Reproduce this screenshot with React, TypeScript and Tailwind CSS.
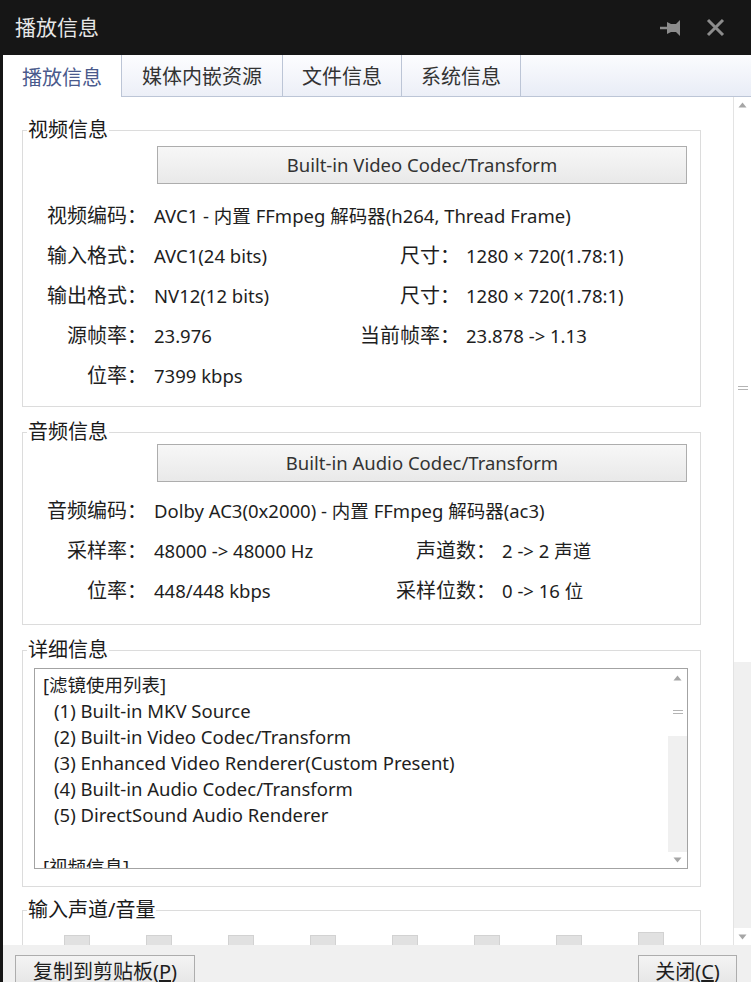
import type { ReactNode } from "react";

const sans = "font-['Noto_Sans','Noto_Sans_CJK_SC',sans-serif]";

const Fieldset = ({
  legend,
  className,
  children,
}: {
  legend: string;
  className?: string;
  children?: ReactNode;
}) => (
  <fieldset
    className={`ml-[19px] w-[679px] border border-[#dcdcdc] ${className ?? ""}`}
  >
    <legend className="ml-[4px] px-[1px] text-[20px] leading-[24px] text-[#1a1a1a]">
      {legend}
    </legend>
    {children}
  </fieldset>
);

const CodecButton = ({ label }: { label: string }) => (
  <div className="ml-[134px] flex h-[38px] w-[530px] items-center justify-center border border-[#adadad] bg-gradient-to-b from-[#f7f7f7] to-[#e9e9e9] text-[18.5px] text-[#333]">
    {label}
  </div>
);

type RowProps = {
  label: string;
  value: string;
  label2?: string;
  value2?: string;
  valueWidth?: string;
};

const Row = ({ label, value, label2, value2, valueWidth = "w-[206px]" }: RowProps) => (
  <div className="flex h-[40px] items-center text-[#1e1e1e]">
    <span className="w-[124px] shrink-0 text-right text-[20px]">{label}</span>
    <span className={`ml-[7px] shrink-0 whitespace-nowrap text-[18.5px] ${label2 ? valueWidth : ""}`}>
      {value}
    </span>
    {label2 && (
      <>
        <span className="w-[100px] shrink-0 text-right text-[20px]">{label2}</span>
        <span className="ml-[6px] whitespace-nowrap text-[18.5px]">{value2}</span>
      </>
    )}
  </div>
);

const Arrow = ({ down }: { down?: boolean }) => (
  <svg width="9" height="6" viewBox="0 0 9 6" className={down ? "rotate-180" : ""}>
    <path d="M4.5 0.5 L8.5 5.5 H0.5 Z" fill="#a6a6a6" />
  </svg>
);

const Grip = () => (
  <div className="flex flex-col gap-[2px]">
    <div className="h-px w-[10px] bg-[#b4b4b4]" />
    <div className="h-px w-[10px] bg-[#b4b4b4]" />
  </div>
);

const filterLines = [
  "(1) Built-in MKV Source",
  "(2) Built-in Video Codec/Transform",
  "(3) Enhanced Video Renderer(Custom Present)",
  "(4) Built-in Audio Codec/Transform",
  "(5) DirectSound Audio Renderer",
];

const tabs = ["播放信息", "媒体内嵌资源", "文件信息", "系统信息"];

export default function App() {
  return (
    <div className={`flex h-[982px] w-[751px] flex-col overflow-hidden bg-[#161616] ${sans}`}>
      {/* title bar */}
      <div className="flex h-[55px] shrink-0 items-center justify-between pl-[15px] pr-[26px]">
        <span className="text-[21px] text-[#e6e6e6]">播放信息</span>
        <div className="flex items-center gap-[24px]">
          <svg width="22" height="18" viewBox="0 0 22 18">
            <path d="M0 9 H8" stroke="#8c8c8c" strokeWidth="2.5" />
            <path d="M7 3 L11 5 H16 L20 1 V17 L16 13 H11 L7 15 Z" fill="#8c8c8c" />
          </svg>
          <svg width="19" height="19" viewBox="0 0 19 19">
            <path d="M2 2 L17 17 M17 2 L2 17" stroke="#8c8c8c" strokeWidth="3" />
          </svg>
        </div>
      </div>

      <div className="ml-[3px] flex min-h-0 flex-1 flex-col bg-white">
        {/* tabs */}
        <div className="flex h-[42px] shrink-0 bg-gradient-to-b from-[#fbfcfe] to-[#e8ecf6]">
          {tabs.map((tab, i) => (
            <div
              key={tab}
              className={`flex items-center border-r border-[#bcc5d6] pt-[3px] text-[20px] ${
                i === 1 ? "px-[20px]" : "px-[19px]"
              } ${
                i === 0
                  ? "bg-white text-[#4a5a8c]"
                  : "border-b bg-gradient-to-b from-[#fdfdff] to-[#eceff7] text-[#333]"
              }`}
            >
              {tab}
            </div>
          ))}
          <div className="flex-1 border-b border-[#bcc5d6]" />
        </div>

        {/* content */}
        <div className="flex min-h-0 flex-1">
          <div className="min-w-0 flex-1 overflow-hidden">
            <Fieldset legend="视频信息" className="mt-[21px] pb-[10px] pt-[4px]">
              <CodecButton label="Built-in Video Codec/Transform" />
              <div className="mt-[12px]">
                <Row label="视频编码：" value="AVC1 - 内置 FFmpeg 解码器(h264, Thread Frame)" />
                <Row label="输入格式：" value="AVC1(24 bits)" label2="尺寸：" value2="1280 × 720(1.78:1)" />
                <Row label="输出格式：" value="NV12(12 bits)" label2="尺寸：" value2="1280 × 720(1.78:1)" />
                <Row label="源帧率：" value="23.976" label2="当前帧率：" value2="23.878 -> 1.13" />
                <Row label="位率：" value="7399 kbps" />
              </div>
            </Fieldset>

            <Fieldset legend="音频信息" className="mt-[13px] pb-[13px]">
              <CodecButton label="Built-in Audio Codec/Transform" />
              <div className="mt-[9px]">
                <Row label="音频编码：" value="Dolby AC3(0x2000) - 内置 FFmpeg 解码器(ac3)" />
                <Row
                  label="采样率："
                  value="48000 -> 48000 Hz"
                  label2="声道数："
                  value2="2 -> 2 声道"
                  valueWidth="w-[242px]"
                />
                <Row
                  label="位率："
                  value="448/448 kbps"
                  label2="采样位数："
                  value2="0 -> 16 位"
                  valueWidth="w-[242px]"
                />
              </div>
            </Fieldset>

            <Fieldset legend="详细信息" className="mt-[13px] pb-[17px]">
              <div className="ml-[11px] mt-[6px] flex h-[201px] w-[654px] border border-[#a3a3a3]">
                <div className="min-w-0 flex-1 overflow-hidden pl-[8px] pt-[3px] text-[18.5px] leading-[26px] text-[#1e1e1e]">
                  <div>[滤镜使用列表]</div>
                  {filterLines.map((line) => (
                    <div key={line} className="whitespace-nowrap pl-[11px]">
                      {line}
                    </div>
                  ))}
                  <div className="h-[26px]" />
                  <div>[视频信息]</div>
                </div>
                <div className="flex w-[19px] shrink-0 flex-col">
                  <div className="flex h-[18px] items-center justify-center bg-white">
                    <Arrow />
                  </div>
                  <div className="flex h-[49px] items-center justify-center bg-white">
                    <Grip />
                  </div>
                  <div className="flex-1 bg-[#f0f0f0]" />
                  <div className="flex h-[16px] items-center justify-center bg-white">
                    <Arrow down />
                  </div>
                </div>
              </div>
            </Fieldset>

            <Fieldset legend="输入声道/音量" className="mt-[11px] pb-[10px]">
              <div className="ml-[41px] mt-[10px] flex items-end gap-[56px]">
                {Array.from({ length: 8 }).map((_, i) => (
                  <div
                    key={i}
                    className={`w-[26px] border border-[#d2d2d2] bg-[#e1e1e1] ${i === 7 ? "h-[36px]" : "h-[33px]"}`}
                  />
                ))}
              </div>
            </Fieldset>
          </div>

          {/* main scrollbar */}
          <div className="flex w-[18px] shrink-0 flex-col border-l border-[#e3e3e3]">
            <div className="flex h-[16px] items-center justify-center bg-white">
              <Arrow />
            </div>
            <div className="flex h-[549px] items-center justify-center bg-white">
              <Grip />
            </div>
            <div className="flex-1 bg-[#f0f0f0]" />
            <div className="flex h-[17px] items-center justify-center bg-white">
              <Arrow down />
            </div>
          </div>
        </div>

        {/* bottom buttons */}
        <div className="flex h-[37px] shrink-0 items-start justify-between bg-[#f0f0f0] pl-[12px] pr-[14px] pt-[10px]">
          <div className="flex h-[34px] w-[180px] shrink-0 items-center justify-center border border-[#adadad] bg-gradient-to-b from-[#f4f4f4] to-[#e4e4e4] text-[20px] text-[#1e1e1e]">
            复制到剪贴板(<span className="underline">P</span>)
          </div>
          <div className="flex h-[34px] w-[99px] shrink-0 items-center justify-center border border-[#adadad] bg-gradient-to-b from-[#f4f4f4] to-[#e4e4e4] text-[20px] text-[#1e1e1e]">
            关闭(<span className="underline">C</span>)
          </div>
        </div>
      </div>
    </div>
  );
}
